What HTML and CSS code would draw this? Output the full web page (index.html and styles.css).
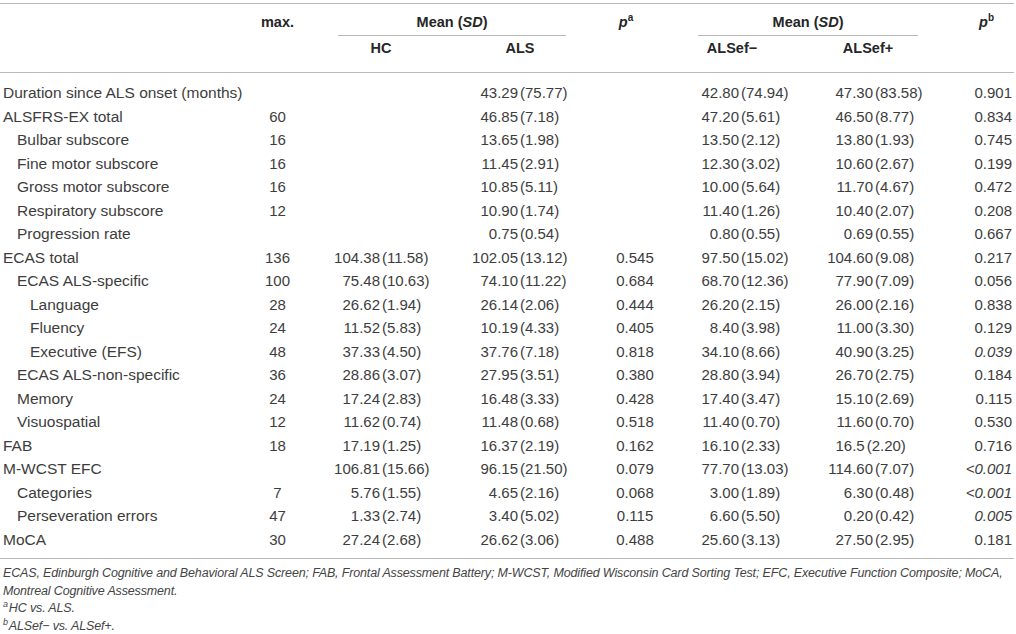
FILE: index.html
```html
<!DOCTYPE html>
<html lang="en">
  <head>
    <meta charset="UTF-8" />
    <meta name="viewport" content="width=device-width, initial-scale=1.0" />
    <title>ALS cohort characteristics</title>
    <link rel="stylesheet" href="styles.css">
  </head>
  <body>
    <div class="wrap">
      <table class="stats">
        <colgroup>
          <col class="c-label" />
          <col class="c-max" />
          <col class="c-hc" />
          <col class="c-als" />
          <col class="c-pa" />
          <col class="c-neg" />
          <col class="c-pos" />
          <col class="c-pb" />
        </colgroup>
        <thead>
          <tr class="head-top">
            <th></th>
            <th class="max">max.</th>
            <th colspan="2"><div class="group g1">Mean (<i>SD</i>)</div></th>
            <th class="pa"><i>p</i><sup>a</sup></th>
            <th colspan="2"><div class="group g2">Mean (<i>SD</i>)</div></th>
            <th class="pb"><i>p</i><sup>b</sup></th>
          </tr>
          <tr class="head-sub">
            <th></th>
            <th></th>
            <th class="hc">HC</th>
            <th class="als">ALS</th>
            <th></th>
            <th class="neg">ALSef&minus;</th>
            <th class="pos">ALSef+</th>
            <th></th>
          </tr>
        </thead>
        <tbody>
          <tr>
            <td class="label">Duration since ALS onset (months)</td>
            <td class="max"></td>
            <td class="hc"></td>
            <td class="als"><span class="m">43.29</span><span class="sd">(75.77)</span></td>
            <td class="pa"></td>
            <td class="neg"><span class="m">42.80</span><span class="sd">(74.94)</span></td>
            <td class="pos"><span class="m">47.30</span><span class="sd">(83.58)</span></td>
            <td class="pb">0.901</td>
          </tr>
          <tr>
            <td class="label">ALSFRS-EX total</td>
            <td class="max">60</td>
            <td class="hc"></td>
            <td class="als"><span class="m">46.85</span><span class="sd">(7.18)</span></td>
            <td class="pa"></td>
            <td class="neg"><span class="m">47.20</span><span class="sd">(5.61)</span></td>
            <td class="pos"><span class="m">46.50</span><span class="sd">(8.77)</span></td>
            <td class="pb">0.834</td>
          </tr>
          <tr>
            <td class="label l1">Bulbar subscore</td>
            <td class="max">16</td>
            <td class="hc"></td>
            <td class="als"><span class="m">13.65</span><span class="sd">(1.98)</span></td>
            <td class="pa"></td>
            <td class="neg"><span class="m">13.50</span><span class="sd">(2.12)</span></td>
            <td class="pos"><span class="m">13.80</span><span class="sd">(1.93)</span></td>
            <td class="pb">0.745</td>
          </tr>
          <tr>
            <td class="label l1">Fine motor subscore</td>
            <td class="max">16</td>
            <td class="hc"></td>
            <td class="als"><span class="m">11.45</span><span class="sd">(2.91)</span></td>
            <td class="pa"></td>
            <td class="neg"><span class="m">12.30</span><span class="sd">(3.02)</span></td>
            <td class="pos"><span class="m">10.60</span><span class="sd">(2.67)</span></td>
            <td class="pb">0.199</td>
          </tr>
          <tr>
            <td class="label l1">Gross motor subscore</td>
            <td class="max">16</td>
            <td class="hc"></td>
            <td class="als"><span class="m">10.85</span><span class="sd">(5.11)</span></td>
            <td class="pa"></td>
            <td class="neg"><span class="m">10.00</span><span class="sd">(5.64)</span></td>
            <td class="pos"><span class="m">11.70</span><span class="sd">(4.67)</span></td>
            <td class="pb">0.472</td>
          </tr>
          <tr>
            <td class="label l1">Respiratory subscore</td>
            <td class="max">12</td>
            <td class="hc"></td>
            <td class="als"><span class="m">10.90</span><span class="sd">(1.74)</span></td>
            <td class="pa"></td>
            <td class="neg"><span class="m">11.40</span><span class="sd">(1.26)</span></td>
            <td class="pos"><span class="m">10.40</span><span class="sd">(2.07)</span></td>
            <td class="pb">0.208</td>
          </tr>
          <tr>
            <td class="label l1">Progression rate</td>
            <td class="max"></td>
            <td class="hc"></td>
            <td class="als"><span class="m">0.75</span><span class="sd">(0.54)</span></td>
            <td class="pa"></td>
            <td class="neg"><span class="m">0.80</span><span class="sd">(0.55)</span></td>
            <td class="pos"><span class="m">0.69</span><span class="sd">(0.55)</span></td>
            <td class="pb">0.667</td>
          </tr>
          <tr>
            <td class="label">ECAS total</td>
            <td class="max">136</td>
            <td class="hc"><span class="m">104.38</span><span class="sd">(11.58)</span></td>
            <td class="als"><span class="m">102.05</span><span class="sd">(13.12)</span></td>
            <td class="pa">0.545</td>
            <td class="neg"><span class="m">97.50</span><span class="sd">(15.02)</span></td>
            <td class="pos"><span class="m">104.60</span><span class="sd">(9.08)</span></td>
            <td class="pb">0.217</td>
          </tr>
          <tr>
            <td class="label l1">ECAS ALS-specific</td>
            <td class="max">100</td>
            <td class="hc"><span class="m">75.48</span><span class="sd">(10.63)</span></td>
            <td class="als"><span class="m">74.10</span><span class="sd">(11.22)</span></td>
            <td class="pa">0.684</td>
            <td class="neg"><span class="m">68.70</span><span class="sd">(12.36)</span></td>
            <td class="pos"><span class="m">77.90</span><span class="sd">(7.09)</span></td>
            <td class="pb">0.056</td>
          </tr>
          <tr>
            <td class="label l2">Language</td>
            <td class="max">28</td>
            <td class="hc"><span class="m">26.62</span><span class="sd">(1.94)</span></td>
            <td class="als"><span class="m">26.14</span><span class="sd">(2.06)</span></td>
            <td class="pa">0.444</td>
            <td class="neg"><span class="m">26.20</span><span class="sd">(2.15)</span></td>
            <td class="pos"><span class="m">26.00</span><span class="sd">(2.16)</span></td>
            <td class="pb">0.838</td>
          </tr>
          <tr>
            <td class="label l2">Fluency</td>
            <td class="max">24</td>
            <td class="hc"><span class="m">11.52</span><span class="sd">(5.83)</span></td>
            <td class="als"><span class="m">10.19</span><span class="sd">(4.33)</span></td>
            <td class="pa">0.405</td>
            <td class="neg"><span class="m">8.40</span><span class="sd">(3.98)</span></td>
            <td class="pos"><span class="m">11.00</span><span class="sd">(3.30)</span></td>
            <td class="pb">0.129</td>
          </tr>
          <tr>
            <td class="label l2">Executive (EFS)</td>
            <td class="max">48</td>
            <td class="hc"><span class="m">37.33</span><span class="sd">(4.50)</span></td>
            <td class="als"><span class="m">37.76</span><span class="sd">(7.18)</span></td>
            <td class="pa">0.818</td>
            <td class="neg"><span class="m">34.10</span><span class="sd">(8.66)</span></td>
            <td class="pos"><span class="m">40.90</span><span class="sd">(3.25)</span></td>
            <td class="pb"><i>0.039</i></td>
          </tr>
          <tr>
            <td class="label l1">ECAS ALS-non-specific</td>
            <td class="max">36</td>
            <td class="hc"><span class="m">28.86</span><span class="sd">(3.07)</span></td>
            <td class="als"><span class="m">27.95</span><span class="sd">(3.51)</span></td>
            <td class="pa">0.380</td>
            <td class="neg"><span class="m">28.80</span><span class="sd">(3.94)</span></td>
            <td class="pos"><span class="m">26.70</span><span class="sd">(2.75)</span></td>
            <td class="pb">0.184</td>
          </tr>
          <tr>
            <td class="label l1">Memory</td>
            <td class="max">24</td>
            <td class="hc"><span class="m">17.24</span><span class="sd">(2.83)</span></td>
            <td class="als"><span class="m">16.48</span><span class="sd">(3.33)</span></td>
            <td class="pa">0.428</td>
            <td class="neg"><span class="m">17.40</span><span class="sd">(3.47)</span></td>
            <td class="pos"><span class="m">15.10</span><span class="sd">(2.69)</span></td>
            <td class="pb">0.115</td>
          </tr>
          <tr>
            <td class="label l1">Visuospatial</td>
            <td class="max">12</td>
            <td class="hc"><span class="m">11.62</span><span class="sd">(0.74)</span></td>
            <td class="als"><span class="m">11.48</span><span class="sd">(0.68)</span></td>
            <td class="pa">0.518</td>
            <td class="neg"><span class="m">11.40</span><span class="sd">(0.70)</span></td>
            <td class="pos"><span class="m">11.60</span><span class="sd">(0.70)</span></td>
            <td class="pb">0.530</td>
          </tr>
          <tr>
            <td class="label">FAB</td>
            <td class="max">18</td>
            <td class="hc"><span class="m">17.19</span><span class="sd">(1.25)</span></td>
            <td class="als"><span class="m">16.37</span><span class="sd">(2.19)</span></td>
            <td class="pa">0.162</td>
            <td class="neg"><span class="m">16.10</span><span class="sd">(2.33)</span></td>
            <td class="pos"><span class="m short">16.5</span><span class="sd">(2.20)</span></td>
            <td class="pb">0.716</td>
          </tr>
          <tr>
            <td class="label">M-WCST EFC</td>
            <td class="max"></td>
            <td class="hc"><span class="m">106.81</span><span class="sd">(15.66)</span></td>
            <td class="als"><span class="m">96.15</span><span class="sd">(21.50)</span></td>
            <td class="pa">0.079</td>
            <td class="neg"><span class="m">77.70</span><span class="sd">(13.03)</span></td>
            <td class="pos"><span class="m">114.60</span><span class="sd">(7.07)</span></td>
            <td class="pb"><i>&lt;0.001</i></td>
          </tr>
          <tr>
            <td class="label l1">Categories</td>
            <td class="max">7</td>
            <td class="hc"><span class="m">5.76</span><span class="sd">(1.55)</span></td>
            <td class="als"><span class="m">4.65</span><span class="sd">(2.16)</span></td>
            <td class="pa">0.068</td>
            <td class="neg"><span class="m">3.00</span><span class="sd">(1.89)</span></td>
            <td class="pos"><span class="m">6.30</span><span class="sd">(0.48)</span></td>
            <td class="pb"><i>&lt;0.001</i></td>
          </tr>
          <tr>
            <td class="label l1">Perseveration errors</td>
            <td class="max">47</td>
            <td class="hc"><span class="m">1.33</span><span class="sd">(2.74)</span></td>
            <td class="als"><span class="m">3.40</span><span class="sd">(5.02)</span></td>
            <td class="pa">0.115</td>
            <td class="neg"><span class="m">6.60</span><span class="sd">(5.50)</span></td>
            <td class="pos"><span class="m">0.20</span><span class="sd">(0.42)</span></td>
            <td class="pb"><i>0.005</i></td>
          </tr>
          <tr>
            <td class="label">MoCA</td>
            <td class="max">30</td>
            <td class="hc"><span class="m">27.24</span><span class="sd">(2.68)</span></td>
            <td class="als"><span class="m">26.62</span><span class="sd">(3.06)</span></td>
            <td class="pa">0.488</td>
            <td class="neg"><span class="m">25.60</span><span class="sd">(3.13)</span></td>
            <td class="pos"><span class="m">27.50</span><span class="sd">(2.95)</span></td>
            <td class="pb">0.181</td>
          </tr>
        </tbody>
      </table>

      <div class="notes">
        <p>ECAS, Edinburgh Cognitive and Behavioral ALS Screen; FAB, Frontal Assessment Battery; M-WCST, Modified Wisconsin Card Sorting Test; EFC, Executive Function Composite; MoCA, Montreal Cognitive Assessment.</p>
        <p><sup>a</sup>HC vs. ALS.</p>
        <p><sup>b</sup>ALSef&minus; vs. ALSef+.</p>
      </div>
    </div>
  </body>
</html>
```

FILE: styles.css
```css
body {
  margin: 0;
  background-color: #ffffff;
  font-family: "Liberation Sans", Arial, sans-serif;
  color: #3d3d3d;
}

.wrap {
  width: 1014px;
  padding-top: 3px;
}

.stats {
  width: 1014px;
  border-collapse: collapse;
  table-layout: fixed;
  font-size: 15px;
  border-top: 1px solid #b9b9b9;
  border-bottom: 1px solid #b9b9b9;
}

.c-label { width: 255px; }
.c-max { width: 45px; }
.c-hc { width: 150px; }
.c-als { width: 140px; }
.c-pa { width: 90px; }
.c-neg { width: 130px; }
.c-pos { width: 135px; }
.c-pb { width: 69px; }

th {
  font-size: 14.5px;
  font-weight: bold;
  color: #262626;
  line-height: 16px;
  padding: 0;
  vertical-align: top;
  white-space: nowrap;
}

th sup {
  font-size: 10px;
  line-height: 0;
}

.head-top th {
  padding-top: 10px;
}

.head-sub th {
  padding-top: 4px;
  padding-bottom: 16px;
  border-bottom: 1px solid #b9b9b9;
}

.group {
  padding-bottom: 5px;
  border-bottom: 1px solid #b9b9b9;
  text-align: center;
}

.g1 {
  margin: 0 24px 0 38px;
}

.g2 {
  margin: 0 27px 0 18px;
}

th.max { text-align: center; }
th.pa { text-align: center; padding-right: 18px; }
th.pb { text-align: center; padding-left: 14px; }
th.hc { text-align: center; padding-left: 12px; }
th.als { text-align: center; }
th.neg { text-align: center; padding-right: 26px; }
th.pos { text-align: center; padding-right: 19px; }

td {
  padding: 4px 0;
  height: 15.5px;
  line-height: 15.5px;
  white-space: nowrap;
  vertical-align: top;
}

td.label {
  padding-left: 3px;
  font-size: 15.5px;
}

tbody tr:first-child td {
  padding-top: 12px;
}

tbody tr:last-child td {
  padding-bottom: 11px;
}

td.l1 { padding-left: 17px; }
td.l2 { padding-left: 30px; }

td.max { text-align: center; }
td.pa { text-align: center; }
td.pb { text-align: right; padding-right: 2px; }

td.hc { --mw: 80px; }
td.als { --mw: 68px; }
td.neg { --mw: 59px; }
td.pos { --mw: 63px; }

.m {
  display: inline-block;
  vertical-align: top;
  width: var(--mw);
  text-align: right;
}

/* one decimal only: keep the point aligned with the others */
.m.short {
  width: calc(var(--mw) - 0.556em);
}

.sd {
  margin-left: 2px;
}

.notes {
  margin-top: 6px;
  padding-left: 3px;
  font-size: 12.5px;
  letter-spacing: -0.15px;
  font-style: italic;
  line-height: 17.7px;
  color: #444;
}

.notes p {
  margin: 0;
}

.notes sup {
  font-size: 9px;
  line-height: 0;
  margin-right: 1px;
}
```
